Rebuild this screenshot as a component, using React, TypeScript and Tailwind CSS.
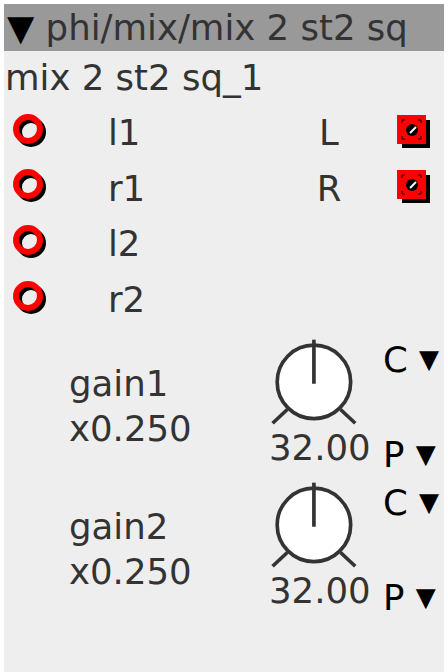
import React from "react";

function Inlet() {
  return (
    <svg width="38" height="38" viewBox="0 0 38 38">
      <circle cx="18" cy="18" r="12" fill="none" stroke="#000" strokeWidth="6" />
      <circle cx="15" cy="15" r="12" fill="none" stroke="#f00" strokeWidth="6" />
    </svg>
  );
}

function Outlet() {
  return (
    <svg width="36" height="36" viewBox="0 0 36 36">
      <rect x="5" y="5" width="28" height="28" fill="#000" />
      <rect x="0" y="0" width="29" height="29" fill="#f00" />
      <circle cx="15" cy="15" r="6" fill="#000" />
      <path d="M13 18 L19 12" stroke="#fff" strokeWidth="2" />
      <path d="M5 8 V5 H8 M21 5 H24 V8 M5 21 V24 H8 M21 24 H24 V21" stroke="#000" strokeWidth="1" fill="none" />
    </svg>
  );
}

function Knob() {
  return (
    <svg width="96" height="98" viewBox="0 0 96 98">
      <circle cx="49" cy="50" r="40" fill="#fff" stroke="#333" strokeWidth="4" />
      <line x1="49" y1="4" x2="49" y2="52" stroke="#333" strokeWidth="4" />
      <line x1="4" y1="95" x2="20" y2="80" stroke="#333" strokeWidth="4" />
      <line x1="78" y1="80" x2="94" y2="95" stroke="#333" strokeWidth="4" />
    </svg>
  );
}

function GainBlock({ name }: { name: string }) {
  return (
    <div className="flex h-[143px] whitespace-nowrap">
      <div className="w-[261px] shrink-0 pl-[65px] pt-[34px] leading-[45px]">
        <div>{name}</div>
        <div>x0.250</div>
      </div>
      <div className="w-[96px] shrink-0 flex flex-col pt-[9px]">
        <Knob />
        <div className="leading-[44px] ml-[4px]">32.00</div>
      </div>
      <div className="shrink-0 flex flex-col gap-[50px] pl-[22px] pt-[10px] text-black leading-[45px]">
        <div>
          C <span className="text-[26px] align-top">▼</span>
        </div>
        <div>
          P <span className="text-[26px] align-top">▼</span>
        </div>
      </div>
    </div>
  );
}

const inlets = ["l1", "r1", "l2", "r2"];
const outlets = ["L", "R"];

export default function App() {
  return (
    <div className="w-[448px] h-[672px] bg-white pl-[4px] pt-[4px] overflow-hidden">
      <div className="w-[440px] h-[668px] bg-[#eeeeee] text-[35.5px] text-[#333] font-['DejaVu_Sans',sans-serif]">
        <div className="bg-[#999999] h-[47px] leading-[47px] pl-[3px] whitespace-nowrap">
          <span className="text-black">▼</span> phi/mix/mix 2 st2 sq
        </div>
        <div className="h-[54px] leading-[54px] pl-[1px] whitespace-nowrap">mix 2 st2 sq_1</div>
        <div className="flex flex-col">
          {inlets.map((name, i) => (
            <div key={name} className="flex items-center h-[55.6px]">
              <div className="w-[104px] pl-[9px] flex items-center">
                <Inlet />
              </div>
              <div className="w-[190px]">{name}</div>
              {outlets[i] ? (
                <div className="flex items-center">
                  <div className="w-[62px] text-center">{outlets[i]}</div>
                  <div className="ml-[37px] flex">
                    <Outlet />
                  </div>
                </div>
              ) : null}
            </div>
          ))}
        </div>
        <GainBlock name="gain1" />
        <GainBlock name="gain2" />
      </div>
    </div>
  );
}
